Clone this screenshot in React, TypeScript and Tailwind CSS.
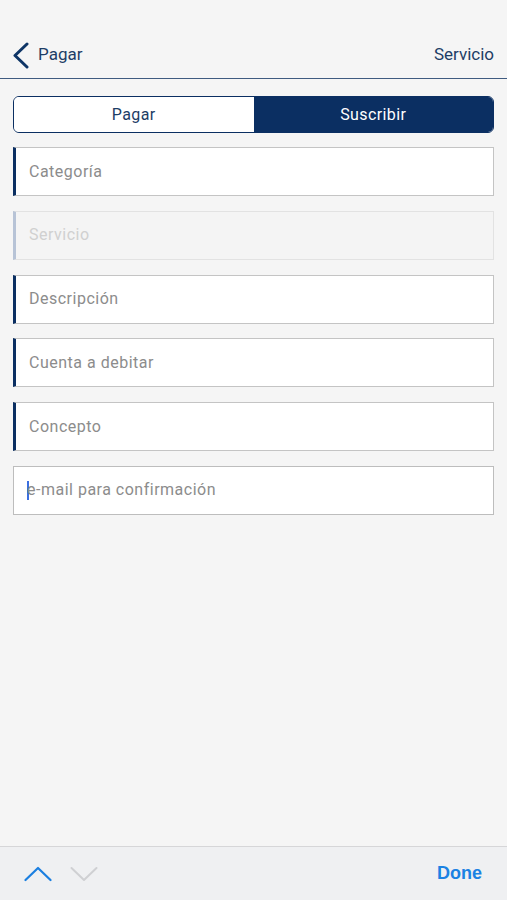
import React from "react";

const fields = [
  { label: "Categoría", kind: "active" },
  { label: "Servicio", kind: "disabled" },
  { label: "Descripción", kind: "active" },
  { label: "Cuenta a debitar", kind: "active" },
  { label: "Concepto", kind: "active" },
  { label: "e-mail para confirmación", kind: "focus" },
];

function Field({ label, kind }: { label: string; kind: string }) {
  if (kind === "disabled") {
    return (
      <div className="h-[49px] flex items-center bg-[#f4f4f4] border border-[#e2e2e2] border-l-[3px] border-l-[#b7c3d6] pl-[13px]">
        <span className="text-[16px] tracking-[0.5px] text-[#d0d0d0]">{label}</span>
      </div>
    );
  }
  if (kind === "focus") {
    return (
      <div className="h-[49px] flex items-center bg-white border border-[#bdbdbd] pl-[13px]">
        <span className="w-[2px] h-[19px] bg-[#3b6fe0] -mr-[2px]" />
        <span className="text-[16px] tracking-[0.5px] text-[#8c8c8c]">{label}</span>
      </div>
    );
  }
  return (
    <div className="h-[49px] flex items-center bg-white border border-[#c4c4c4] border-l-[3px] border-l-[#0b2f62] pl-[13px]">
      <span className="text-[16px] tracking-[0.5px] text-[#8c8c8c]">{label}</span>
    </div>
  );
}

export default function App() {
  return (
    <div className="h-[900px] flex flex-col bg-[#f5f5f5] font-['Roboto',sans-serif]">
      {/* nav bar */}
      <div className="h-[79px] pt-[32px] flex items-center justify-between border-b border-[#3f5b80] px-[12px]">
        <div className="flex items-center gap-[9px]">
          <svg width="17" height="27" viewBox="0 0 17 27" fill="none">
            <path d="M15 2 L3 13.5 L15 25" stroke="#0e3566" strokeWidth="3" strokeLinecap="round" strokeLinejoin="round" />
          </svg>
          <span className="text-[17px] text-[#1d3d66]">Pagar</span>
        </div>
        <span className="text-[17px] text-[#1d3d66] pr-[1px]">Servicio</span>
      </div>

      <div className="flex-1 px-[13px] pt-[17px]">
        {/* segmented control */}
        <div className="h-[37px] flex rounded-[6px] border-[1.5px] border-[#0b2f62] overflow-hidden">
          <div className="flex-1 flex items-center justify-center bg-white text-[16px] tracking-[0.4px] text-[#1d3d66]">Pagar</div>
          <div className="flex-1 flex items-center justify-center bg-[#0b2f62] text-[16px] tracking-[0.4px] text-white">Suscribir</div>
        </div>

        <div className="mt-[14px] flex flex-col gap-[14.8px]">
          {fields.map((f) => (
            <Field key={f.label} label={f.label} kind={f.kind} />
          ))}
        </div>
      </div>

      {/* keyboard accessory bar */}
      <div className="h-[54px] flex items-center justify-between bg-[#eff0f2] border-t border-[#d6d6d8] pl-[24px] pr-[25px]">
        <div className="flex items-center gap-[18px]">
          <svg width="28" height="16" viewBox="0 0 28 16" fill="none">
            <path d="M1.5 14 L14 2 L26.5 14" stroke="#1b7fe0" strokeWidth="2.2" strokeLinecap="round" strokeLinejoin="round" />
          </svg>
          <svg width="28" height="16" viewBox="0 0 28 16" fill="none">
            <path d="M1.5 2 L14 14 L26.5 2" stroke="#cfd0d3" strokeWidth="2" strokeLinecap="round" strokeLinejoin="round" />
          </svg>
        </div>
        <span className="text-[18px] font-bold text-[#1b82e3] font-['Liberation_Sans',sans-serif]">Done</span>
      </div>
    </div>
  );
}
